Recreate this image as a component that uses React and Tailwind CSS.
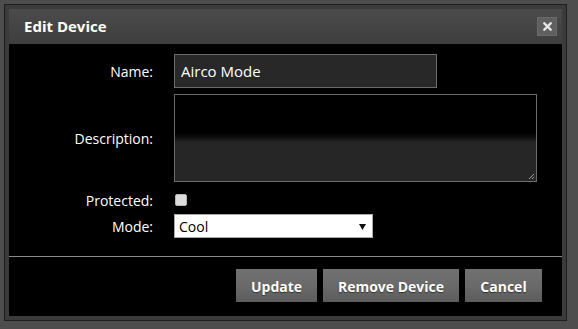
import React from 'react';
import { X } from 'lucide-react';

const font = { fontFamily: '"Open Sans", "Noto Sans", sans-serif' };

const FieldLabel = ({ children }) => (
  <div className="w-[145px] shrink-0 pr-[1px] text-right text-[14px] text-white">{children}</div>
);

const Button = ({ children, width }) => (
  <button
    className={`${width} h-[33px] pt-[2px] bg-gradient-to-b from-[#717171] via-[#6a6a6a] to-[#5c5c5c] text-[14px] font-bold text-white [text-shadow:0_1px_1px_rgba(0,0,0,0.5)]`}
  >
    {children}
  </button>
);

export default function App() {
  return (
    <div className="w-[578px] h-[329px] bg-[#4d4d4d] pl-1 pt-1 overflow-hidden" style={font}>
      <div className="w-[563px] h-[317px] border border-[#1e1e1e] bg-[#3b3b3b] p-1 flex flex-col">
        {/* Title bar */}
        <div className="h-[35px] shrink-0 flex items-center justify-between pl-[15px] pr-[5px] bg-gradient-to-b from-[#4b4b4b] to-[#3e3e3e]">
          <span className="text-[15px] font-bold text-white">Edit Device</span>
          <div className="w-[20px] h-[19px] bg-[#5f5f5f] border border-[#6a6a6a] flex items-center justify-center">
            <X size={13} strokeWidth={4.5} className="text-[#e8e8e8]" />
          </div>
        </div>

        {/* Body */}
        <div className="flex-1 bg-black flex flex-col">
          <div className="mt-[10px] h-[34px] flex items-center gap-5">
            <FieldLabel>Name:</FieldLabel>
            <div className="w-[263px] h-[34px] bg-[#282828] border border-[#6b6b6b] flex items-center pl-[6px] text-[15px] text-white">
              Airco Mode
            </div>
          </div>

          <div className="mt-[6px] h-[88px] flex items-center gap-5">
            <FieldLabel>Description:</FieldLabel>
            <div className="relative w-[363px] h-[88px] border border-[#6b6b6b] bg-gradient-to-b from-black via-black via-40% to-[#262626] to-55%">
              <svg className="absolute right-[1px] bottom-[1px]" width="8" height="8" viewBox="0 0 8 8">
                <path d="M7 2 L2 7 M7 5 L5 7" stroke="#9a9a9a" strokeWidth="1" />
              </svg>
            </div>
          </div>

          <div className="mt-[8px] h-[20px] flex items-center gap-5">
            <FieldLabel>Protected:</FieldLabel>
            <div className="ml-[1px] w-[12px] h-[12px] rounded-[2px] bg-[#dcdcdc] border border-[#b5b5b5]" />
          </div>

          <div className="mt-[4px] h-[24px] flex items-center gap-5">
            <FieldLabel>Mode:</FieldLabel>
            <div className="w-[199px] h-[24px] bg-white border border-[#a9a9a9] flex items-center justify-between pl-[4px] pr-[6px] text-[14px] text-black">
              <span>Cool</span>
              <svg width="7" height="7" viewBox="0 0 7 7">
                <path d="M0 1 H7 L3.5 7 Z" fill="#111" />
              </svg>
            </div>
          </div>

          <div className="mt-[18px] border-t border-[#8a8a8a]" />

          <div className="mt-[12px] flex justify-end gap-[6px] pr-[20px]">
            <Button width="w-[81px]">Update</Button>
            <Button width="w-[136px]">Remove Device</Button>
            <Button width="w-[77px]">Cancel</Button>
          </div>
        </div>
      </div>
    </div>
  );
}
